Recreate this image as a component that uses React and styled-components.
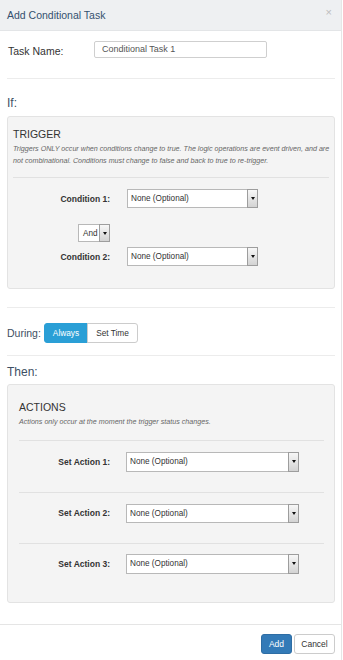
import React from "react";
import styled, { createGlobalStyle } from "styled-components";

const Global = createGlobalStyle`
  html, body { margin: 0; padding: 0; background: #fff; }
  body { font-family: "Liberation Sans", Arial, sans-serif; color: #333; }
  * { box-sizing: border-box; }
`;

const Modal = styled.div`
  width: 342px;
  min-height: 660px;
  border-right: 1px solid #e6e6e6;
  background: #fff;
  display: flex;
  flex-direction: column;
`;

const Header = styled.div`
  height: 31px;
  background: #eef0f2;
  border-bottom: 1px solid #e3e5e7;
  display: flex;
  align-items: center;
  justify-content: space-between;
  padding: 0 9px 0 7px;
`;

const Title = styled.h4`
  margin: 0;
  font-size: 10.5px;
  font-weight: normal;
  color: #34506f;
`;

const Close = styled.span`
  font-size: 11px;
  color: #bdbdbd;
  line-height: 1;
  margin-top: -5px;
`;

const Body = styled.div`
  padding: 0 6px 0 7px;
  display: flex;
  flex-direction: column;
`;

const TaskRow = styled.div`
  display: flex;
  align-items: center;
  margin-top: 9px;
  height: 18px;
`;

const TaskLabel = styled.label`
  width: 87px;
  padding-left: 1px;
  font-size: 10.5px;
  color: #333;
  margin-top: 3px;
`;

const TextInput = styled.div`
  width: 173px;
  height: 17px;
  border: 1px solid #cfcfcf;
  border-radius: 2px;
  font-size: 9px;
  color: #555;
  padding-left: 7px;
  display: flex;
  align-items: center;
`;

const Divider = styled.div`
  height: 1px;
  background: #ececec;
  margin-top: ${(p) => p.$mt}px;
`;

const SectionLabel = styled.div`
  font-size: ${(p) => p.$size || 12}px;
  line-height: 14px;
  color: #3d4f63;
  margin-top: ${(p) => p.$mt}px;
`;

const Panel = styled.div`
  background: #f4f4f4;
  border: 1px solid #e3e3e3;
  border-radius: 3px;
  margin-top: ${(p) => p.$mt}px;
  padding: ${(p) => p.$pad};
  display: flex;
  flex-direction: column;
`;

const PanelTitle = styled.div`
  font-size: 10.5px;
  line-height: 12px;
  color: #333;
`;

const PanelNote = styled.div`
  font-size: 7.15px;
  font-style: italic;
  line-height: 11.5px;
  color: #666;
  margin-top: ${(p) => p.$mt}px;
  white-space: nowrap;
`;

const Rule = styled.div`
  height: 1px;
  background: #e1e1e1;
  margin-top: ${(p) => p.$mt}px;
`;

const FieldRow = styled.div`
  display: grid;
  grid-template-columns: ${(p) => p.$label}px auto;
  column-gap: ${(p) => p.$gap}px;
  align-items: center;
  margin-top: ${(p) => p.$mt}px;
`;

const FieldLabel = styled.label`
  text-align: right;
  font-size: 8.5px;
  font-weight: bold;
  color: #333;
`;

const SelectBox = styled.div`
  width: ${(p) => p.$w}px;
  height: ${(p) => p.$h}px;
  border: 1px solid #b8b8b8;
  background: #fff;
  display: flex;
  align-items: stretch;
  justify-content: space-between;
  font-size: 8.2px;
  color: #333;
  justify-self: ${(p) => p.$justify || "start"};
`;

const SelectText = styled.span`
  display: flex;
  align-items: center;
  padding-left: ${(p) => p.$pl || 3}px;
`;

const ArrowBtn = styled.span`
  width: 11px;
  margin: -1px -1px -1px 0;
  border: 1px solid #9d9d9d;
  background: linear-gradient(#f7f7f7, #d3d3d3);
  display: flex;
  align-items: center;
  justify-content: center;
`;

const ArrowTri = styled.span`
  width: 0;
  height: 0;
  border-left: 2.5px solid transparent;
  border-right: 2.5px solid transparent;
  border-top: 3px solid #111;
`;

const Select = ({ w, h, text, justify, pl }) => (
  <SelectBox $w={w} $h={h} $justify={justify}>
    <SelectText $pl={pl}>{text}</SelectText>
    <ArrowBtn>
      <ArrowTri />
    </ArrowBtn>
  </SelectBox>
);

const DuringRow = styled.div`
  display: flex;
  align-items: center;
  margin-top: 15px;
  height: 20px;
`;

const BtnGroup = styled.div`
  display: flex;
  margin-left: 3px;
`;

const ToggleBtn = styled.button`
  height: 20px;
  padding: 0 ${(p) => p.$px}px;
  font-family: inherit;
  font-size: 8.3px;
  border: 1px solid ${(p) => (p.$active ? "#2a9fd6" : "#cccccc")};
  background: ${(p) => (p.$active ? "#2a9fd6" : "#fff")};
  color: ${(p) => (p.$active ? "#fff" : "#333")};
  border-radius: ${(p) => (p.$first ? "3px 0 0 3px" : "0 3px 3px 0")};
  margin-left: ${(p) => (p.$first ? 0 : -1)}px;
`;

const Footer = styled.div`
  margin-top: 21px;
  border-top: 1px solid #e5e5e5;
  padding: 9px 6px 0 0;
  display: flex;
  justify-content: flex-end;
  gap: 2px;
`;

const FooterBtn = styled.button`
  height: 20px;
  width: ${(p) => p.$w}px;
  padding: 0;
  font-family: inherit;
  font-size: 8.5px;
  border-radius: 3px;
  border: 1px solid ${(p) => (p.$primary ? "#2e6da4" : "#cccccc")};
  background: ${(p) => (p.$primary ? "#337ab7" : "#fff")};
  color: ${(p) => (p.$primary ? "#fff" : "#333")};
`;

export default function App() {
  return (
    <>
      <Global />
      <Modal>
        <Header>
          <Title>Add Conditional Task</Title>
          <Close>×</Close>
        </Header>
        <Body>
          <TaskRow>
            <TaskLabel>Task Name:</TaskLabel>
            <TextInput>Conditional Task 1</TextInput>
          </TaskRow>
          <Divider $mt={20} />
          <SectionLabel $mt={17}>If:</SectionLabel>
          <Panel $mt={6} $pad="11px 5px 22px 5px">
            <PanelTitle>TRIGGER</PanelTitle>
            <PanelNote $mt={4}>
              Triggers ONLY occur when conditions change to true. The logic operations are event driven, and are
              <br />
              not combinational. Conditions must change to false and back to true to re-trigger.
            </PanelNote>
            <Rule $mt={10} />
            <FieldRow $label={97} $gap={17} $mt={11}>
              <FieldLabel>Condition 1:</FieldLabel>
              <Select w={131} h={19} text="None (Optional)" />
            </FieldRow>
            <FieldRow $label={97} $gap={17} $mt={16}>
              <Select w={32} h={18} text="And" justify="end" pl={4} />
              <span />
            </FieldRow>
            <FieldRow $label={97} $gap={17} $mt={5}>
              <FieldLabel>Condition 2:</FieldLabel>
              <Select w={131} h={19} text="None (Optional)" />
            </FieldRow>
          </Panel>
          <Divider $mt={18} />
          <DuringRow>
            <SectionLabel $mt={0} $size={10.5}>During:</SectionLabel>
            <BtnGroup>
              <ToggleBtn $active $first $px={8}>Always</ToggleBtn>
              <ToggleBtn $px={8}>Set Time</ToggleBtn>
            </BtnGroup>
          </DuringRow>
          <Divider $mt={12} />
          <SectionLabel $mt={9}>Then:</SectionLabel>
          <Panel $mt={5} $pad="16px 10px 28px 11px">
            <PanelTitle>ACTIONS</PanelTitle>
            <PanelNote $mt={4}>Actions only occur at the moment the trigger status changes.</PanelNote>
            <Rule $mt={11} />
            <FieldRow $label={91} $gap={16} $mt={11}>
              <FieldLabel>Set Action 1:</FieldLabel>
              <Select w={173} h={20} text="None (Optional)" />
            </FieldRow>
            <Rule $mt={20} />
            <FieldRow $label={91} $gap={16} $mt={11}>
              <FieldLabel>Set Action 2:</FieldLabel>
              <Select w={173} h={19} text="None (Optional)" />
            </FieldRow>
            <Rule $mt={20} />
            <FieldRow $label={91} $gap={16} $mt={10}>
              <FieldLabel>Set Action 3:</FieldLabel>
              <Select w={173} h={20} text="None (Optional)" />
            </FieldRow>
          </Panel>
        </Body>
        <Footer>
          <FooterBtn $primary $w={31}>Add</FooterBtn>
          <FooterBtn $w={41}>Cancel</FooterBtn>
        </Footer>
      </Modal>
    </>
  );
}
